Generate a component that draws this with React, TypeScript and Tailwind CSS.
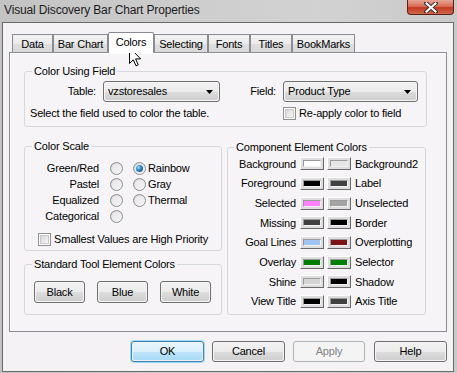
import React from "react";

function Radio({ checked = false }: { checked?: boolean }) {
  return (
    <div className="w-[13px] h-[13px] rounded-full border border-[#8e8f8f] bg-gradient-to-br from-[#d0d0d0] to-[#fbfbfb] flex items-center justify-center shrink-0">
      <div className="w-[9px] h-[9px] rounded-full bg-gradient-to-br from-[#e6e6e6] to-[#f4f4f4] flex items-center justify-center">
        {checked && (
          <div className="w-[7px] h-[7px] rounded-full bg-[radial-gradient(circle_at_35%_35%,#9fe0ff_0%,#2a8ad4_40%,#0b3f7a_100%)]" />
        )}
      </div>
    </div>
  );
}

function Check() {
  return (
    <div className="w-[13px] h-[13px] border border-[#8e8f8f] bg-white p-[1px] shrink-0">
      <div className="w-full h-full border border-[#c8c8c8] bg-gradient-to-br from-[#d6d6d6] to-[#f8f8f8]" />
    </div>
  );
}

function Btn({ children, w, def = false, disabled = false }: { children: React.ReactNode; w: string; def?: boolean; disabled?: boolean }) {
  if (def) {
    return (
      <div className={`${w} h-[21px] rounded-[3px] border border-[#3c7fb1] shadow-[0_0_0_1px_#9fdcf7] p-[1px]`}>
        <div className="w-full h-full rounded-[2px] bg-[linear-gradient(to_bottom,#e6f5fc_0%,#d9f0fc_50%,#bee6fd_51%,#a7d9f5_100%)] flex items-center justify-center leading-none">
          {children}
        </div>
      </div>
    );
  }
  if (disabled) {
    return (
      <div className={`${w} h-[21px] rounded-[3px] border border-[#adb2b5] bg-[#f4f4f4] flex items-center justify-center leading-none text-[#838383]`}>
        {children}
      </div>
    );
  }
  return (
    <div className={`${w} h-[21px] rounded-[3px] border border-[#707070] p-[1px]`}>
      <div className="w-full h-full rounded-[2px] bg-[linear-gradient(to_bottom,#f2f2f2_0%,#ebebeb_50%,#dddddd_51%,#cfcfcf_100%)] flex items-center justify-center leading-none">
        {children}
      </div>
    </div>
  );
}

function Select({ w, text }: { w: string; text: string }) {
  return (
    <div className={`${w} h-[21px] rounded-[3px] border border-[#707070] p-[1px] shrink-0`}>
      <div className="w-full h-full rounded-[2px] bg-[linear-gradient(to_bottom,#f2f2f2_0%,#ebebeb_50%,#dddddd_51%,#cfcfcf_100%)] flex items-center justify-between pl-[3px] pr-[5px] leading-none">
        <span>{text}</span>
        <svg width="7" height="4" viewBox="0 0 7 4">
          <path d="M0 0 H7 L3.5 4 Z" fill="#000" />
        </svg>
      </div>
    </div>
  );
}

function Swatch({ color }: { color: string }) {
  return (
    <div className="w-[24px] h-[13px] border border-t-white border-l-white border-b-[#6a6a6a] border-r-[#6a6a6a] bg-[#dedede] px-[2px] py-[2px] shrink-0 flex">
      <div className="flex-1 border border-t-[#9a9a9a] border-l-[#9a9a9a] border-b-[#f2f2f2] border-r-[#f2f2f2]" style={{ backgroundColor: color }} />
    </div>
  );
}

const tabs: { label: string; w: string; sel?: boolean }[] = [
  { label: "Data", w: "w-[41px]" },
  { label: "Bar Chart", w: "w-[55px]" },
  { label: "Colors", w: "w-[46px]", sel: true },
  { label: "Selecting", w: "w-[54px]" },
  { label: "Fonts", w: "w-[42px]" },
  { label: "Titles", w: "w-[42px]" },
  { label: "BookMarks", w: "w-[63px]" },
];

const scale: [string, boolean, string | null, boolean][] = [
  ["Green/Red", false, "Rainbow", true],
  ["Pastel", false, "Gray", false],
  ["Equalized", false, "Thermal", false],
  ["Categorical", false, null, false],
];

const comps: [string, string, string, string][] = [
  ["Background", "#ffffff", "#e6e6e6", "Background2"],
  ["Foreground", "#000000", "#404040", "Label"],
  ["Selected", "#ff80ff", "#a4a4a4", "Unselected"],
  ["Missing", "#404040", "#000000", "Border"],
  ["Goal Lines", "#a0c4f4", "#7c1416", "Overplotting"],
  ["Overlay", "#008000", "#008000", "Selector"],
  ["Shine", "#d4d4d4", "#000000", "Shadow"],
  ["View Title", "#000000", "#404040", "Axis Title"],
];

export default function App() {
  return (
    <div className="w-[457px] h-[373px] relative overflow-hidden flex flex-col bg-[linear-gradient(to_right,#c3c3c3,#cdcdcd_40%,#d2d2d2_70%,#c9c9c9)] font-['Liberation_Sans',Arial,sans-serif] text-[11px] tracking-[-0.18px] text-black">
      {/* Title bar */}
      <div className="h-[22px] flex justify-between shrink-0">
        <span className="pl-[4px] pt-[3px] text-[12px] leading-[15px] tracking-[-0.15px] text-[#1c1c1c]">Visual Discovery Bar Chart Properties</span>
        <div className="w-[47px] h-[15px] mr-[3px] rounded-b-[4px] border border-t-0 border-[#5a2219] bg-[linear-gradient(to_bottom,#e9a595_0%,#d96e55_45%,#c4391f_55%,#d2684b_100%)] flex items-center justify-center">
          <svg width="14" height="11" viewBox="0 0 14 11">
            <path d="M2 1 L12 10 M12 1 L2 10" stroke="#3a3a3a" strokeWidth="4" strokeLinecap="square" />
            <path d="M2.5 1.5 L11.5 9.5 M11.5 1.5 L2.5 9.5" stroke="#ffffff" strokeWidth="2" strokeLinecap="square" />
          </svg>
        </div>
      </div>

      {/* Body */}
      <div className="ml-[2px] w-[452px] h-[350px] border border-[#6a6a6a] bg-[#f4f2f4] flex flex-col shrink-0">
        {/* Tabs */}
        <div className="ml-[6px] mt-[9px] h-[20px] flex items-end pl-[3px]">
          {tabs.map((t) =>
            t.sel ? (
              <div key={t.label} className={`${t.w} h-[21px] -mb-[1px] relative z-10 bg-white border border-b-0 border-[#898c95] rounded-t-[2px] flex justify-center pt-[3px] leading-[13px]`}>
                {t.label}
              </div>
            ) : (
              <div key={t.label} className={`${t.w} h-[18px] bg-[linear-gradient(to_bottom,#f3f3f3,#ebebeb_50%,#dedede_51%,#d9d9d9)] border border-b-0 border-[#898c95] flex justify-center pt-[3px] leading-[13px]`}>
                {t.label}
              </div>
            )
          )}
        </div>

        {/* Panel */}
        <div className="ml-[6px] w-[438px] h-[280px] border border-[#898c95] bg-[#f6f4f6] shadow-[inset_1px_1px_0_#ffffff] pl-[14px] pt-[12px] flex flex-col">
          {/* Color Using Field */}
          <fieldset className="w-[403px] border border-[#d5d9de] rounded-[3px] pb-[6px]">
            <legend className="ml-[7px] px-[2px] leading-[13px]">Color Using Field</legend>
            <div className="mt-[3px] flex items-center h-[21px]">
              <span className="w-[71px] text-right">Table:</span>
              <div className="ml-[7px]">
                <Select w="w-[117px]" text="vzstoresales" />
              </div>
              <span className="w-[56px] text-right">Field:</span>
              <div className="ml-[7px]">
                <Select w="w-[135px]" text="Product Type" />
              </div>
            </div>
            <div className="mt-[5px] flex items-center h-[13px]">
              <span className="w-[258px] pl-[5px]">Select the field used to color the table.</span>
              <Check />
              <span className="ml-[3px]">Re-apply color to field</span>
            </div>
          </fieldset>

          <div className="mt-[13px] flex gap-[5px] items-stretch">
            {/* Left column */}
            <div className="w-[198px] flex flex-col">
              <fieldset className="border border-[#d5d9de] rounded-[3px] pb-[4px]">
                <legend className="ml-[7px] px-[2px] leading-[13px]">Color Scale</legend>
                <div className="mt-[7px] flex flex-col">
                  {scale.map(([l, c1, r, c2]) => (
                    <div key={l} className="h-[16px] flex items-center">
                      <span className="w-[74px] text-right">{l}</span>
                      <div className="ml-[11px]">
                        <Radio checked={c1} />
                      </div>
                      {r && (
                        <>
                          <div className="ml-[10px]">
                            <Radio checked={c2} />
                          </div>
                          <span className="ml-[2px]">{r}</span>
                        </>
                      )}
                    </div>
                  ))}
                </div>
                <div className="mt-[9px] h-[13px] flex items-center pl-[13px]">
                  <Check />
                  <span className="ml-[3px]">Smallest Values are High Priority</span>
                </div>
              </fieldset>
              <fieldset className="mt-[7px] border border-[#d5d9de] rounded-[3px] pb-[11px]">
                <legend className="ml-[7px] px-[2px] leading-[13px]">Standard Tool Element Colors</legend>
                <div className="mt-[10px] flex pl-[9px] gap-[12px]">
                  <Btn w="w-[51px] !h-[22px]">Black</Btn>
                  <Btn w="w-[51px] !h-[22px]">Blue</Btn>
                  <Btn w="w-[51px] !h-[22px]">White</Btn>
                </div>
              </fieldset>
            </div>

            {/* Right column */}
            <fieldset className="w-[199px] mt-[1px] border border-[#d5d9de] rounded-[3px]">
              <legend className="ml-[6px] px-[2px] leading-[13px]">Component Element Colors</legend>
              <div className="flex flex-col">
                {comps.map(([l, c1, c2, r]) => (
                  <div key={l} className="h-[19.7px] flex items-center">
                    <span className="w-[68px] text-right">{l}</span>
                    <div className="ml-[4px]">
                      <Swatch color={c1} />
                    </div>
                    <div className="ml-[3px]">
                      <Swatch color={c2} />
                    </div>
                    <span className="ml-[4px]">{r}</span>
                  </div>
                ))}
              </div>
            </fieldset>
          </div>
        </div>

        {/* Dialog buttons */}
        <div className="mt-[9px] flex justify-end pr-[6px]">
          <Btn w="w-[73px]" def>OK</Btn>
          <div className="ml-[8px]">
            <Btn w="w-[73px]">Cancel</Btn>
          </div>
          <div className="ml-[8px]">
            <Btn w="w-[72px]" disabled>Apply</Btn>
          </div>
          <div className="ml-[9px]">
            <Btn w="w-[73px]">Help</Btn>
          </div>
        </div>
      </div>

      {/* Mouse cursor */}
      <svg className="absolute left-[129px] top-[47px]" width="13" height="20" viewBox="0 0 13 20">
        <path d="M0.5 0.5 L0.5 16.5 L4.3 12.8 L7 18.8 L9.2 17.8 L6.6 11.9 L11.6 11.9 Z" fill="#ffffff" stroke="#000000" strokeWidth="1" strokeLinejoin="miter" />
      </svg>
    </div>
  );
}
